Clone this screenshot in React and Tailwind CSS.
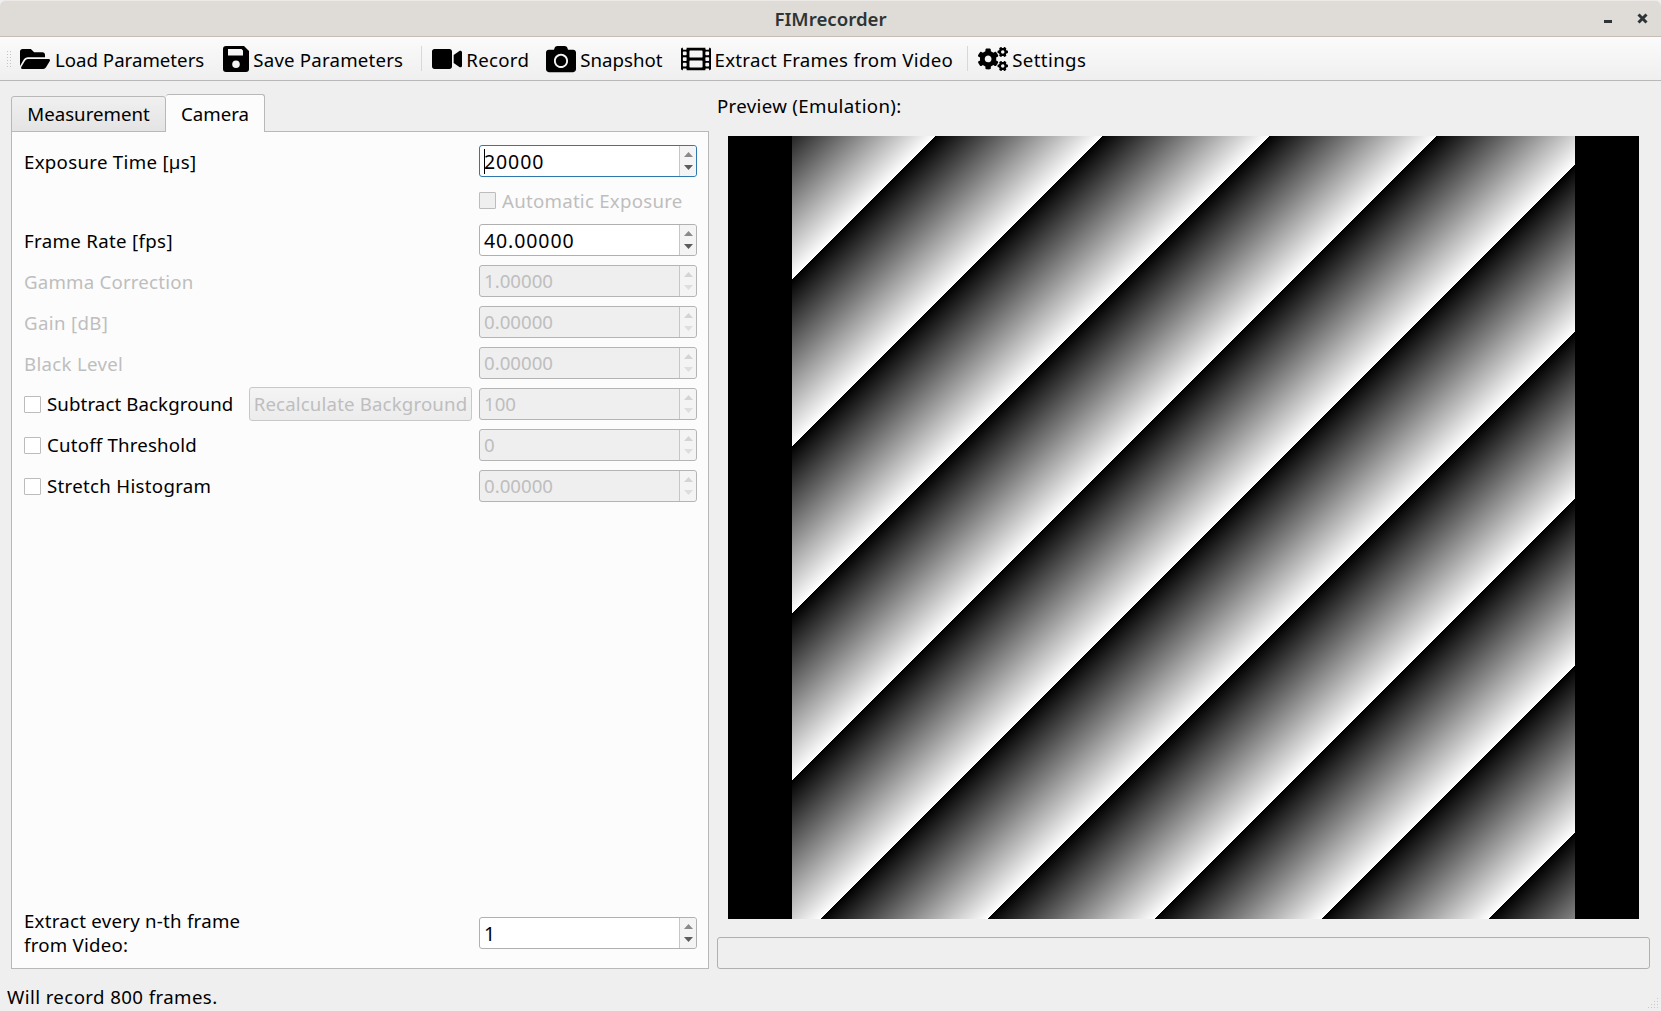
import { FaFolderOpen, FaVideo, FaCamera, FaFilm, FaCogs } from "react-icons/fa";

const ToolButton = ({ icon, label, className = "", labelClass = "" }) => (
  <div className={"flex items-center " + className}>
    {icon}
    <span className={"pt-[2px] " + labelClass}>{label}</span>
  </div>
);

const Separator = () => <div className="w-px h-[25px] bg-[#d8d8d8]" />;

// floppy icon, drawn because the packaged one has a different label cut-out
const SaveIcon = () => (
  <svg width="30" height="30" viewBox="0 0 30 30">
    <path
      fillRule="evenodd"
      d="M5 2H23L28 7V25A3 3 0 0 1 25 28H5A3 3 0 0 1 2 25V5A3 3 0 0 1 5 2ZM7 5V11.5H22V6.5L20.5 5ZM15 16.5A3.8 3.8 0 1 0 15 24.1A3.8 3.8 0 1 0 15 16.5Z"
      fill="#000"
    />
  </svg>
);

const Arrows = ({ disabled }) => (
  <div className="flex flex-col w-[17px] items-center justify-center gap-[8px] border-l border-[#c6c6c6] bg-[#f4f4f4] rounded-r-[3px]">
    <svg width="9" height="5" viewBox="0 0 9 5"><path d="M4.5 0L9 5H0Z" fill={disabled ? "#d4d4d4" : "#8a8a8a"} /></svg>
    <svg width="9" height="5" viewBox="0 0 9 5"><path d="M0 0H9L4.5 5Z" fill={disabled ? "#dedede" : "#5c5c5c"} /></svg>
  </div>
);

const SpinBox = ({ value, disabled, focused }) => (
  <div
    className={
      "flex w-[218px] h-[32px] shrink-0 rounded-[3px] border leading-none " +
      (focused ? "border-[#2f78ad] bg-white text-black" : disabled ? "border-[#b4b4b4] bg-[#efefef] text-[#bebebe]" : "border-[#b0b0b0] bg-white text-black")
    }
  >
    <div className={"relative flex-1 flex items-center pl-[4px] " + (disabled ? "text-[18.67px]" : "pt-[2px] text-[19.5px] tracking-[0.9px]")}>
      {focused && <div className="absolute left-[4px] top-[3px] w-px h-[25px] bg-black" />}
      {value}
    </div>
    <Arrows disabled={disabled} />
  </div>
);

const CheckBox = ({ disabled }) => (
  <div className={"w-[17px] h-[17px] shrink-0 rounded-[1px] border border-[#bcbcbc] " + (disabled ? "bg-[#efefef]" : "bg-white")} />
);

const Row = ({ children, value, disabled, focused, className = "" }) => (
  <div className={"flex items-center justify-between h-[32px] " + className}>
    <div className="flex flex-1 items-center">{children}</div>
    <SpinBox value={value} disabled={disabled} focused={focused} />
  </div>
);

const Muted = ({ children, className = "" }) => <span className={"text-[#bebebe] pt-[1px] " + className}>{children}</span>;

const CheckLabel = ({ children, className = "" }) => (
  <div className="flex items-center gap-[6px]">
    <CheckBox />
    <span className={className}>{children}</span>
  </div>
);

const App = () => {
  return (
    <div className="w-[1661px] h-[1011px] flex flex-col bg-[#efefef] text-[18.67px] text-black overflow-hidden font-['Noto_Sans',sans-serif]">
      {/* window title */}
      <div className="relative h-[37px] shrink-0 flex items-center justify-center bg-[#dfdcd8] border-b border-[#c6beb5] border-t border-t-[#ece9e6] rounded-t-[6px] text-[#2e3436] font-semibold">
        FIMrecorder
        <div className="absolute right-[13px] top-[12px] flex items-start gap-[25px]">
          <div className="w-[8px] h-[2.5px] bg-[#2e3436] mt-[7px]" />
          <svg width="11" height="11" viewBox="0 0 11 11"><path d="M1.5 1.5L9.5 9.5M9.5 1.5L1.5 9.5" stroke="#2e3436" strokeWidth="3" /></svg>
        </div>
      </div>

      {/* toolbar */}
      <div className="h-[44px] shrink-0 flex items-center pl-[6px] bg-gradient-to-b from-[#fbfbfb] to-[#efefef] border-b border-[#b8b8b8]">
        <div className="w-[5px] h-[18px] mr-[9px] bg-[radial-gradient(circle,#c4c4c4_0.7px,transparent_0.9px)] bg-[length:3px_3px]" />
        <ToolButton icon={<FaFolderOpen size={30} />} label="Load Parameters" className="mr-[17px] gap-[5px]" />
        <ToolButton icon={<SaveIcon />} label="Save Parameters" className="mr-[18px] gap-[2px]" labelClass="tracking-[0.2px]" />
        <Separator />
        <ToolButton icon={<FaVideo size={30} />} label="Record" className="ml-[10px] mr-[17px] gap-[4px]" labelClass="tracking-[0.3px]" />
        <ToolButton icon={<FaCamera size={30} />} label="Snapshot" className="mr-[19px] gap-[4px]" />
        <ToolButton icon={<FaFilm size={30} />} label="Extract Frames from Video" className="mr-[14px] gap-[3px]" labelClass="tracking-[0.3px]" />
        <Separator />
        <ToolButton icon={<FaCogs size={30} />} label="Settings" className="ml-[10px] gap-[4px]" labelClass="tracking-[0.4px]" />
      </div>

      {/* main area */}
      <div className="flex-1 flex pl-[11px] pr-[11px] pt-[13px] min-h-0">
        <div className="w-[698px] shrink-0 flex flex-col">
          <div className="flex items-end h-[38px] -mb-px relative z-10">
            <div className="w-[155px] h-[36px] flex items-center justify-center bg-gradient-to-b from-[#f0f0f0] to-[#e4e4e4] border border-[#b8b8b8] rounded-t-[3px]">
              Measurement
            </div>
            <div className="w-[99px] h-[38px] flex items-center justify-center bg-[#fcfcfc] border border-b-0 border-l-0 border-[#b8b8b8] rounded-t-[3px]">
              Camera
            </div>
          </div>
          <div className="h-[838px] flex flex-col border border-[#b8b8b8] bg-[#fcfcfc] pl-[12px] pr-[11px]">
            <Row value="20000" focused className="mt-[13px]"><span className="pt-[1px] tracking-[0.3px]">Exposure Time [µs]</span></Row>
            <div className="h-[47px] pl-[455px] flex items-center gap-[6px]">
              <CheckBox disabled />
              <span className="text-[#bebebe] tracking-[0.25px]">Automatic Exposure</span>
            </div>
            <Row value="40.00000"><span className="pt-[1px] tracking-[0.33px]">Frame Rate [fps]</span></Row>
            <Row value="1.00000" disabled className="mt-[9px]"><Muted className="tracking-[0.2px]">Gamma Correction</Muted></Row>
            <Row value="0.00000" disabled className="mt-[9px]"><Muted className="tracking-[0.35px]">Gain [dB]</Muted></Row>
            <Row value="0.00000" disabled className="mt-[9px]"><Muted className="tracking-[0.3px]">Black Level</Muted></Row>
            <Row value="100" disabled className="mt-[9px]">
              <CheckLabel className="tracking-[0.1px]">Subtract Background</CheckLabel>
              <div className="ml-auto mr-[7px] w-[223px] h-[34px] flex items-center justify-center rounded-[3px] border border-[#c8c8c8] bg-gradient-to-b from-[#f4f4f4] to-[#ececec] text-[#bebebe] tracking-[0.15px]">
                Recalculate Background
              </div>
            </Row>
            <Row value="0" disabled className="mt-[9px]"><CheckLabel className="tracking-[0.2px]">Cutoff Threshold</CheckLabel></Row>
            <Row value="0.00000" disabled className="mt-[9px]"><CheckLabel className="tracking-[0.3px]">Stretch Histogram</CheckLabel></Row>
            <div className="flex-1" />
            <Row value="1" className="mb-[19px]">
              <div className="leading-[24px] tracking-[0.25px]">
                Extract every n-th frame
                <br />
                from Video:
              </div>
            </Row>
          </div>
        </div>

        <div className="flex-1 min-w-0 flex flex-col ml-[8px]">
          <div className="h-[23px] flex items-center tracking-[0.33px]">Preview (Emulation):</div>
          <div className="ml-[11px] mt-[19px] w-[911px] h-[783px] flex justify-center bg-black">
            <div className="w-[783px] h-[783px] bg-[repeating-linear-gradient(135deg,#000_-16.7px,#fff_101.4px)]" />
          </div>
          <div className="mt-[18px] w-[933px] h-[32px] rounded-[3px] border border-[#b0b0b0]" />
        </div>
      </div>

      {/* status bar */}
      <div className="relative h-[42px] shrink-0 flex items-center pl-[7px] pt-[14px] tracking-[0.4px]">
        Will record 800 frames.
        <svg className="absolute right-[2px] bottom-[2px]" width="11" height="11" viewBox="0 0 11 11" fill="#c8c8c8">
          <rect x="9" y="0" width="1" height="1" />
          <rect x="6" y="3" width="1" height="1" />
          <rect x="9" y="3" width="1" height="1" />
          <rect x="3" y="6" width="1" height="1" />
          <rect x="6" y="6" width="1" height="1" />
          <rect x="9" y="6" width="1" height="1" />
          <rect x="0" y="9" width="1" height="1" />
          <rect x="3" y="9" width="1" height="1" />
          <rect x="6" y="9" width="1" height="1" />
          <rect x="9" y="9" width="1" height="1" />
        </svg>
      </div>
    </div>
  );
};

export default App;
